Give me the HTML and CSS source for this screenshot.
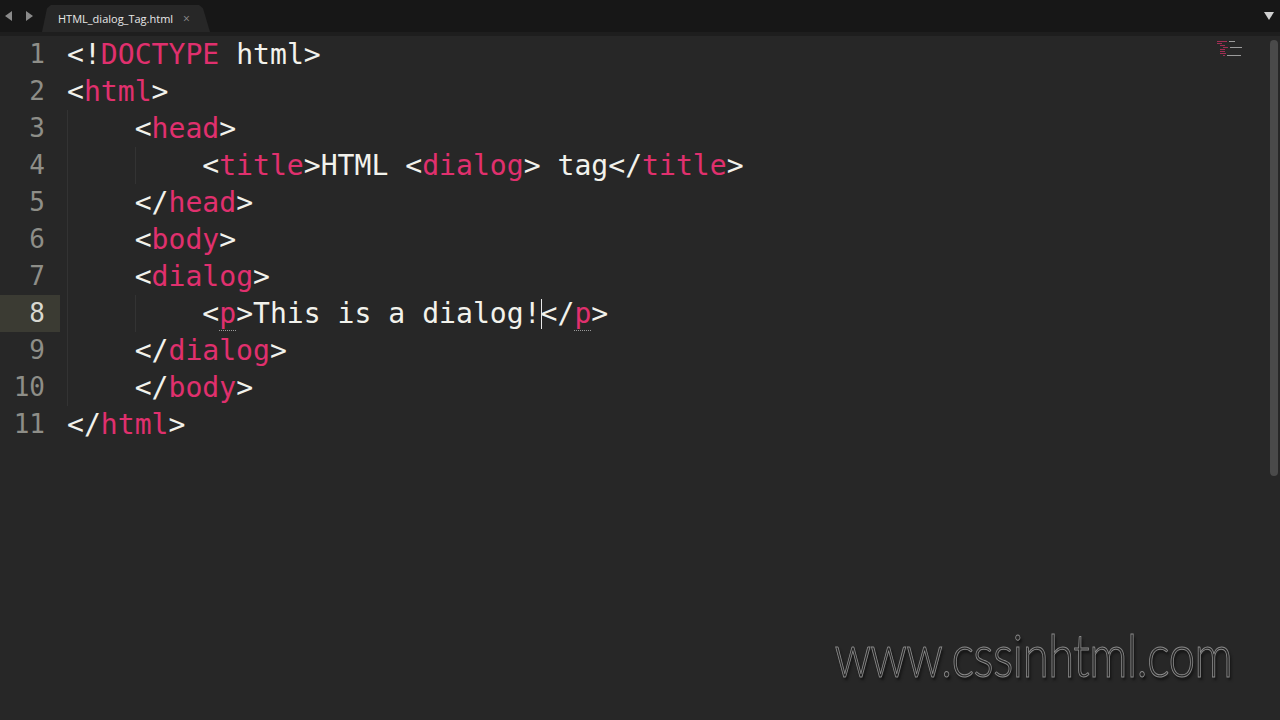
FILE: index.html
```html
<!DOCTYPE html>
<html lang="en">
<head>
    <meta charset="UTF-8">
    <meta name="viewport" content="width=device-width, initial-scale=1.0">
    <title>HTML_dialog_Tag.html</title>
    <link rel="stylesheet" href="styles.css">
</head>
<body>
    <div class="tabbar">
        <div class="nav-arrows">
            <svg width="30" height="12" viewBox="0 0 30 12"><path d="M1 6 L8 1 L8 11 Z" fill="#8a8a8a"/><path d="M29 6 L22 1 L22 11 Z" fill="#8a8a8a"/></svg>
        </div>
        <div class="tab">
            <span class="tab-name">HTML_dialog_Tag.html</span>
            <span class="tab-close">&times;</span>
        </div>
        <div class="tab-menu">
            <svg width="10" height="8" viewBox="0 0 10 8"><path d="M0 0 H10 L5 8 Z" fill="#d0d0d0"/></svg>
        </div>
    </div>

    <div class="window">
        <div class="editor">
            <div class="row"><span class="ln">1</span><span class="code">&lt;!<span class="tag">DOCTYPE</span> html&gt;</span></div>
            <div class="row"><span class="ln">2</span><span class="code">&lt;<span class="tag">html</span>&gt;</span></div>
            <div class="row"><span class="ln">3</span><span class="code"><span class="indent"></span>&lt;<span class="tag">head</span>&gt;</span></div>
            <div class="row"><span class="ln">4</span><span class="code"><span class="indent"></span><span class="indent"></span>&lt;<span class="tag">title</span>&gt;HTML &lt;<span class="tag">dialog</span>&gt; tag&lt;/<span class="tag">title</span>&gt;</span></div>
            <div class="row"><span class="ln">5</span><span class="code"><span class="indent"></span>&lt;/<span class="tag">head</span>&gt;</span></div>
            <div class="row"><span class="ln">6</span><span class="code"><span class="indent"></span>&lt;<span class="tag">body</span>&gt;</span></div>
            <div class="row"><span class="ln">7</span><span class="code"><span class="indent"></span>&lt;<span class="tag">dialog</span>&gt;</span></div>
            <div class="row current"><span class="ln">8</span><span class="code"><span class="indent"></span><span class="indent"></span>&lt;<span class="tag match">p</span>&gt;This is a dialog!<span class="caret"></span>&lt;/<span class="tag match">p</span>&gt;</span></div>
            <div class="row"><span class="ln">9</span><span class="code"><span class="indent"></span>&lt;/<span class="tag">dialog</span>&gt;</span></div>
            <div class="row"><span class="ln">10</span><span class="code"><span class="indent"></span>&lt;/<span class="tag">body</span>&gt;</span></div>
            <div class="row"><span class="ln">11</span><span class="code">&lt;/<span class="tag">html</span>&gt;</span></div>
        </div>

        <div class="minimap">
            <div class="mm-line"><i class="mm-pink" style="width: 10px"></i><i style="width: 6px"></i></div>
            <div class="mm-line"><i class="mm-pink" style="width: 5px"></i></div>
            <div class="mm-line pad1"><i class="mm-pink" style="width: 5px"></i></div>
            <div class="mm-line pad2"><i class="mm-pink" style="width: 5px"></i><i style="width: 12px"></i></div>
            <div class="mm-line pad1"><i class="mm-pink" style="width: 5px"></i></div>
            <div class="mm-line pad1"><i class="mm-pink" style="width: 5px"></i></div>
            <div class="mm-line pad1"><i class="mm-pink" style="width: 6px"></i></div>
            <div class="mm-line pad2"><i class="mm-pink" style="width: 2px"></i><i style="width: 14px"></i></div>
        </div>

        <div class="scrollbar">
            <div class="thumb"></div>
        </div>

        <div class="watermark">www.cssinhtml.com</div>
    </div>
</body>
</html>
```

FILE: styles.css
```css
body {
    margin: 0;
    height: 720px;
    overflow: hidden;
    background-color: #272727;
    font-family: "DejaVu Sans Mono", monospace;
}

.tabbar {
    display: flex;
    align-items: flex-end;
    height: 32px;
    background-color: #171717;
    border-bottom: 4px solid #1e1e1e;
}

.nav-arrows {
    display: flex;
    align-items: center;
    width: 42px;
    height: 32px;
    padding-left: 4px;
    box-sizing: border-box;
}

.tab {
    display: flex;
    align-items: center;
    height: 27px;
    width: 168px;
    padding-left: 16px;
    box-sizing: border-box;
    background-color: #272727;
    clip-path: polygon(0 100%, 5px 12%, 9px 0, 157px 0, 161px 12%, 168px 100%);
    font-family: "Open Sans", sans-serif;
    font-size: 11px;
    color: #e8e8e8;
}

.tab-close {
    margin-left: 10px;
    color: #8c8c8c;
    font-size: 12px;
}

.tab-menu {
    margin-left: auto;
    height: 32px;
    display: flex;
    align-items: center;
    padding-right: 6px;
}

.window {
    position: relative;
    display: flex;
    height: 684px;
}

.editor {
    flex: 1;
    font-size: 28.1px;
    color: #f2f2ec;
}

.row {
    display: flex;
    height: 37px;
    line-height: 37px;
    white-space: pre;
}

.ln {
    width: 60px;
    padding-right: 15px;
    box-sizing: border-box;
    text-align: right;
    color: #8e8e88;
    font-size: 26px;
}

.row.current .ln {
    background-color: #3b3b33;
    color: #d8d8d0;
}

.code {
    padding-left: 7px;
}

.indent {
    display: inline-block;
    width: 4ch;
    height: 37px;
    vertical-align: top;
    box-sizing: border-box;
    border-left: 1px solid #333333;
}

.tag {
    color: #e0306e;
}

.match {
    text-decoration: underline dotted #9a9a9a;
    text-underline-offset: 7px;
    text-decoration-thickness: 1px;
}

.caret {
    display: inline-block;
    width: 1px;
    height: 30px;
    margin-right: -1px;
    vertical-align: -6px;
    background-color: #e8e8e8;
}

.minimap {
    position: absolute;
    top: 5px;
    right: 38px;
    display: flex;
    flex-direction: column;
    gap: 1px;
    opacity: 0.8;
}

.mm-line {
    display: flex;
    gap: 2px;
    height: 1px;
}

.mm-line.pad1 {
    padding-left: 3px;
}

.mm-line.pad2 {
    padding-left: 6px;
}

.mm-line i {
    display: block;
    height: 1px;
    background-color: #b8b8b8;
}

.mm-line i.mm-pink {
    background-color: #c03060;
}

.scrollbar {
    width: 14px;
    padding: 4px 2px 0 4px;
    box-sizing: border-box;
}

.thumb {
    width: 8px;
    height: 436px;
    border-radius: 4px;
    background-color: #4a4a4a;
}

.watermark {
    position: absolute;
    right: 48px;
    bottom: 30px;
    font-family: "Lato", sans-serif;
    font-weight: 300;
    font-size: 60px;
    letter-spacing: -1px;
    color: #262626;
    -webkit-text-stroke: 1px #8a8a8a;
    text-shadow: 2px 3px 3px #111111;
    transform: scaleX(0.8);
    transform-origin: right center;
}
```
